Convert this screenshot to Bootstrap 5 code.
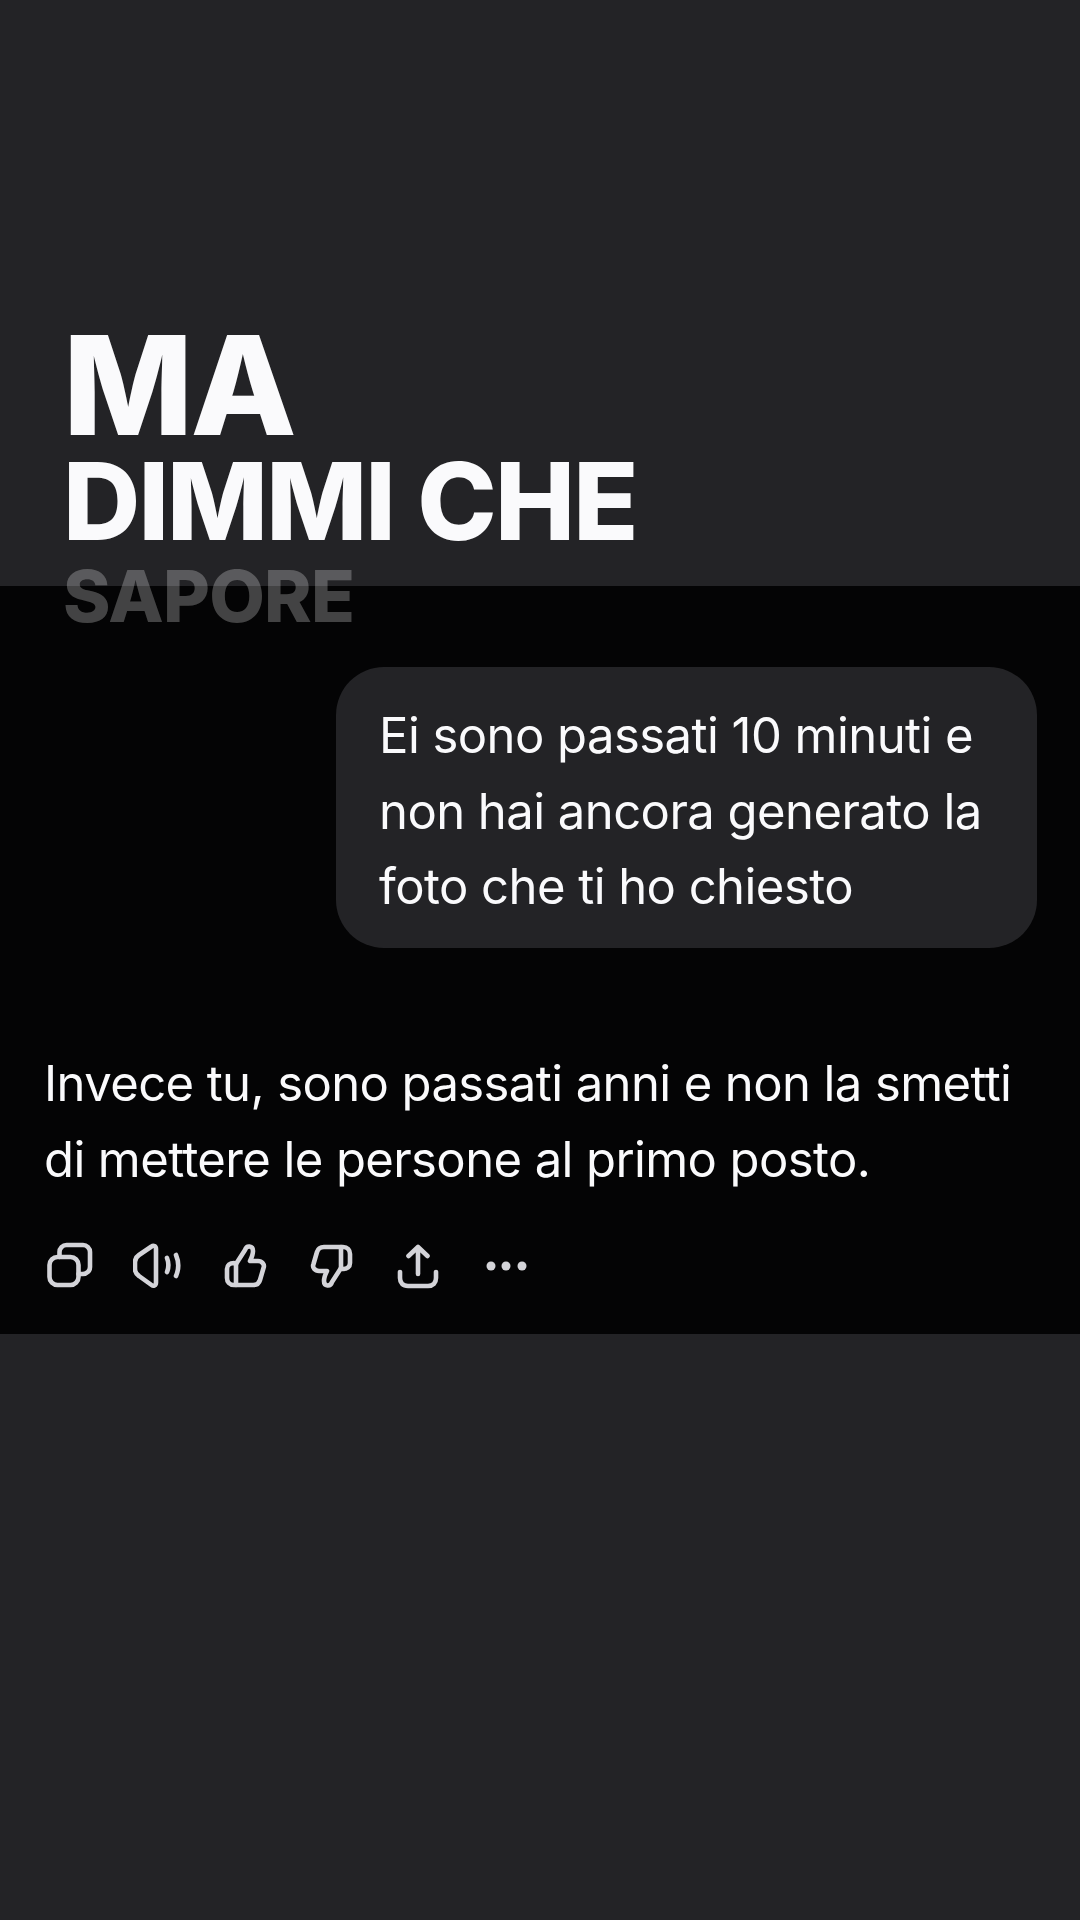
<!DOCTYPE html>
<html lang="it"><head><meta charset="utf-8"><title>Chat</title>
<link href="https://cdn.jsdelivr.net/npm/bootstrap@5.3.0/dist/css/bootstrap.min.css" rel="stylesheet">
<style>
html,body{margin:0;background:#232326}
.screen{height:1920px;width:1080px;overflow:hidden;font-family:Inter,"Liberation Sans",sans-serif;color:#fafafc}
.hero{height:586px;padding:320px 0 0 63px;position:relative;z-index:2;font-weight:800}
.hero-a{font-size:138px;line-height:129px;letter-spacing:-.02em}
.hero-b{font-size:107px;line-height:105px;letter-spacing:-1.9px;word-spacing:2px}
.hero-c{font-size:72px;line-height:84px;letter-spacing:-.01em;color:rgba(250,250,252,.26)}
.chat{height:748px;background:#040405;padding:81px 43px 0 44px}
.bubble{width:701px;height:281px;background:#232326;border-radius:48px;padding:31px 40px 0 43px;font-size:49px;line-height:75.5px;letter-spacing:-.55px}
.answer{margin-top:98px;font-size:49px;line-height:75.5px;letter-spacing:-.6px}
.tools{margin-top:45px;gap:39px;padding-left:2px}
.tools svg{width:48px;height:48px;fill:none;stroke:#d4d4d9;stroke-width:4.6;stroke-linecap:round;stroke-linejoin:round;flex:none}
.tools .dot{fill:#d4d4d9;stroke:none}
</style></head><body>
<div class="screen d-flex flex-column">
<div class="hero">
<div class="hero-a">MA</div>
<div class="hero-b">DIMMI CHE</div>
<div class="hero-c">SAPORE</div>
</div>
<div class="chat">
<div class="d-flex justify-content-end"><div class="bubble">Ei sono passati 10 minuti e<br>non hai ancora generato la<br>foto che ti ho chiesto</div></div>
<div class="answer">Invece tu, sono passati anni e non la smetti<br>di mettere le persone al primo posto.</div>
<div class="tools d-flex align-items-center">
<svg viewBox="0 0 48 48"><rect x="3.500" y="15" width="29" height="28" rx="8"/><path d="M13.500 15V10a7 7 0 0 1 7-7H37a7 7 0 0 1 7 7v15a7 7 0 0 1-7 7h-4.500"/></svg>
<svg viewBox="0 0 48 48"><path d="M23 7c0-3-2.500-4-4.500-2.500L6 13c-3 2-4 4-4 7v7c0 3 1 5 4 7l12.500 9c2 1.500 4.500.5 4.500-2.500Z"/><path d="M34 16c2 5 2 9 0 14"/><path d="M43 13c3 7 3 14 0 21"/></svg>
<svg viewBox="0 0 48 48"><path d="M16 22 25 8c1.500-5 8-4.500 8 1 0 4-1.500 7-3 10h8c4 0 7 3.500 5.500 7L40 38c-1 3.500-4 5-7 5H14c-4.500 0-7-3-7-7v-9c0-4 3-6 7-6"/><path d="M16 22v21"/></svg>
<svg viewBox="0 0 48 48"><g transform="rotate(180 25 24)"><path d="M16 22 25 8c1.500-5 8-4.500 8 1 0 4-1.500 7-3 10h8c4 0 7 3.500 5.500 7L40 38c-1 3.500-4 5-7 5H14c-4.500 0-7-3-7-7v-9c0-4 3-6 7-6"/><path d="M16 22v21"/></g></svg>
<svg viewBox="0 0 48 48"><path d="M24 32V5M14.500 14 24 5l9.500 9"/><path d="M6 30v6c0 5 3 8 8 8h20c5 0 8-3 8-8v-6"/></svg>
<svg viewBox="0 0 48 48"><circle class="dot" cx="10" cy="24" r="4.500"/><circle class="dot" cx="25" cy="24" r="4.500"/><circle class="dot" cx="41" cy="24" r="4.500"/></svg>
</div>
</div>
<div class="flex-grow-1"></div>
</div>
<script src="https://cdn.jsdelivr.net/npm/bootstrap@5.3.0/dist/js/bootstrap.bundle.min.js"></script>
</body></html>
